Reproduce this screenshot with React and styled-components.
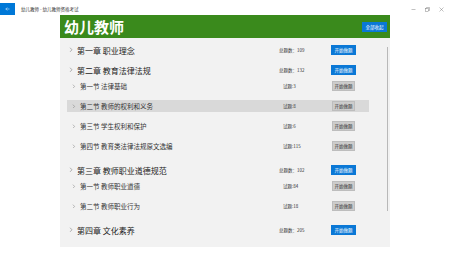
import React from "react";
import styled, { createGlobalStyle } from "styled-components";

const Global = createGlobalStyle`
  html, body { margin: 0; padding: 0; background: #ffffff; }
  body { font-family: "Noto Sans CJK SC", "Noto Sans", sans-serif; }
  * { box-sizing: border-box; }
`;

const Window = styled.div`
  width: 450px;
  height: 253px;
  display: flex;
  flex-direction: column;
  overflow: hidden;
  background: #fff;
`;

const TitleBar = styled.div`
  height: 15px;
  padding-top: 3px;
  display: flex;
  align-items: flex-start;
  flex-shrink: 0;
`;

const BackButton = styled.div`
  width: 15px;
  height: 12px;
  background: #0078d7;
  display: flex;
  align-items: center;
  justify-content: center;
`;

const TitleText = styled.div`
  margin-left: 6px;
  height: 12px;
  line-height: 12px;
  font-size: 4.5px;
  color: #333;
  flex: 1;
  white-space: nowrap;
`;

const Controls = styled.div`
  display: flex;
  align-items: center;
  height: 12px;
  gap: 9px;
  padding-right: 6px;
  color: #555;
`;

const Main = styled.div`
  flex: 1;
  display: flex;
  flex-direction: column;
  margin: 0 0 6px 60px;
  width: 330px;
  min-height: 0;
`;

const Header = styled.div`
  height: 23px;
  background: #3a8a1c;
  display: flex;
  align-items: center;
  justify-content: space-between;
  padding: 0 3px 0 4px;
  flex-shrink: 0;
`;

const HeaderTitle = styled.div`
  color: #fff;
  font-size: 15px;
  font-weight: 700;
`;

const Btn = styled.div`
  height: 10px;
  width: ${(p) => p.$w || 25}px;
  display: flex;
  align-items: center;
  justify-content: center;
  font-size: 4.5px;
  white-space: nowrap;
  background: ${(p) => (p.$primary ? "#0a78d6" : "#cccccc")};
  color: ${(p) => (p.$primary ? "#fff" : "#333")};
  border: 0.5px solid ${(p) => (p.$primary ? "#0a78d6" : "#bdbdbd")};
`;

const Panel = styled.div`
  flex: 1;
  background: #f2f2f2;
  padding-top: 6px;
  position: relative;
  overflow: hidden;
`;

const ScrollThumb = styled.div`
  position: absolute;
  right: 2px;
  top: 9px;
  width: 1.5px;
  height: 164px;
  background: #b8b8b8;
`;

const Chapter = styled.div`
  margin-bottom: 8px;
`;

const ChapterRow = styled.div`
  height: 12px;
  display: grid;
  grid-template-columns: 8px 1fr 52px 25px;
  align-items: center;
  padding-left: 9px;
  padding-right: 34px;
`;

const Chevron = styled.span`
  display: flex;
  align-items: center;
`;

const ChapterTitle = styled.div`
  font-size: 8px;
  color: #222;
  white-space: nowrap;
`;

const Count = styled.div`
  font-size: 4.5px;
  color: #333;
  white-space: nowrap;
`;

const SectionRow = styled.div`
  height: 20px;
  display: flex;
  align-items: center;
  margin: 0 21px 0 7px;
`;

const SectionInner = styled.div`
  flex: 1;
  height: 12px;
  display: grid;
  grid-template-columns: 8px 1fr 49px 23px;
  align-items: center;
  padding-left: 5px;
  padding-right: 14px;
  background: ${(p) => (p.$active ? "#d9d9d9" : "transparent")};
`;

const SectionTitle = styled.div`
  font-size: 6.5px;
  color: #333;
  white-space: nowrap;
`;

const Arrow = ({ size = 4 }) => (
  <svg width={size} height={size * 1.4} viewBox="0 0 4 6">
    <path d="M1 0.8 L3 3 L1 5.2" fill="none" stroke="#777" strokeWidth="0.6" />
  </svg>
);

const data = [
  { title: "第一章 职业理念", total: 109, sections: [] },
  {
    title: "第二章 教育法律法规",
    total: 132,
    sections: [
      { title: "第一节 法律基础", n: 3 },
      { title: "第二节 教师的权利和义务", n: 8, active: true },
      { title: "第三节 学生权利和保护", n: 6 },
      { title: "第四节 教育类法律法规原文选编", n: 115 },
    ],
  },
  {
    title: "第三章 教师职业道德规范",
    total: 102,
    sections: [
      { title: "第一节 教师职业道德", n: 84 },
      { title: "第二节 教师职业行为", n: 18 },
    ],
  },
  { title: "第四章 文化素养", total: 205, sections: [] },
];

export default function App() {
  return (
    <>
      <Global />
      <Window>
        <TitleBar>
          <BackButton>
            <svg width="5" height="4" viewBox="0 0 10 8">
              <path d="M9 4 H1.5 M4.5 1 L1.5 4 L4.5 7" fill="none" stroke="#fff" strokeWidth="1" />
            </svg>
          </BackButton>
          <TitleText>幼儿教师 - 幼儿教师资格考试</TitleText>
          <Controls>
            <svg width="5" height="5" viewBox="0 0 10 10">
              <path d="M1 5 H9" stroke="#666" strokeWidth="0.8" />
            </svg>
            <svg width="5" height="5" viewBox="0 0 10 10">
              <rect x="1" y="3" width="6" height="6" fill="none" stroke="#666" strokeWidth="0.8" />
              <path d="M3 3 V1 H9 V7 H7" fill="none" stroke="#666" strokeWidth="0.8" />
            </svg>
            <svg width="5" height="5" viewBox="0 0 10 10">
              <path d="M1 1 L9 9 M9 1 L1 9" stroke="#666" strokeWidth="0.8" />
            </svg>
          </Controls>
        </TitleBar>
        <Main>
          <Header>
            <HeaderTitle>幼儿教师</HeaderTitle>
            <Btn $primary $w={25}>全部收起</Btn>
          </Header>
          <Panel>
            {data.map((c) => (
              <Chapter key={c.title}>
                <ChapterRow>
                  <Chevron><Arrow size={4} /></Chevron>
                  <ChapterTitle>{c.title}</ChapterTitle>
                  <Count>总题数：{c.total}</Count>
                  <Btn $primary>开始做题</Btn>
                </ChapterRow>
                {c.sections.map((s) => (
                  <SectionRow key={s.title}>
                    <SectionInner $active={s.active}>
                      <Chevron><Arrow size={3.5} /></Chevron>
                      <SectionTitle>{s.title}</SectionTitle>
                      <Count>试题:{s.n}</Count>
                      <Btn $w={23}>开始做题</Btn>
                    </SectionInner>
                  </SectionRow>
                ))}
              </Chapter>
            ))}
            <ScrollThumb />
          </Panel>
        </Main>
      </Window>
    </>
  );
}
